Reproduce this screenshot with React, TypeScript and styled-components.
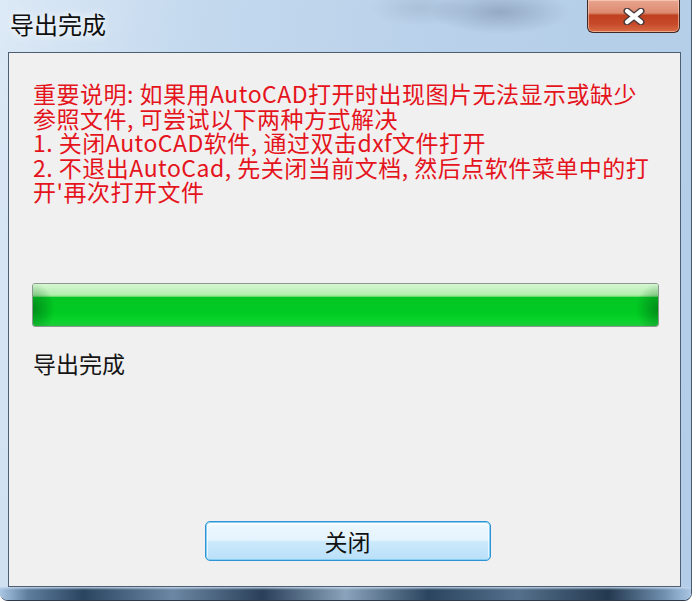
import React from 'react';
import styled, { createGlobalStyle } from 'styled-components';

const GlobalStyle = createGlobalStyle`
  html, body {
    margin: 0;
    padding: 0;
    background: #ffffff;
  }
  body {
    font-family: "Noto Sans CJK SC", "Noto Sans", sans-serif;
  }
`;

const Window = styled.div`
  width: 692px;
  height: 601px;
  box-sizing: border-box;
  display: flex;
  flex-direction: column;
  border-radius: 0 0 8px 8px;
  border-right: 1px solid #4a5a6c;
  border-bottom: 1px solid #2c3a4a;
  background:
    radial-gradient(ellipse 70px 22px at 500px 12px, rgba(120, 140, 165, 0.55), transparent),
    radial-gradient(ellipse 50px 18px at 420px 8px, rgba(140, 160, 185, 0.35), transparent),
    linear-gradient(100deg, #dce9f6 0%, #c4d9ee 25%, #b9d1ea 55%, #b3cde8 100%);
  overflow: hidden;
`;

const TitleBar = styled.div`
  height: 52px;
  flex-shrink: 0;
  display: flex;
  justify-content: space-between;
  align-items: flex-start;
`;

const Title = styled.div`
  margin: 7px 0 0 10px;
  font-size: 24px;
  line-height: 34px;
  color: #101010;
  text-shadow: 0 0 6px rgba(255, 255, 255, 0.95), 0 0 12px rgba(255, 255, 255, 0.8);
`;

const CloseButton = styled.div`
  width: 93px;
  height: 33px;
  margin-right: 11px;
  box-sizing: border-box;
  display: flex;
  align-items: center;
  justify-content: center;
  border: 1px solid #3b2a28;
  border-top: none;
  border-radius: 0 0 6px 6px;
  background: linear-gradient(
    to bottom,
    #e9a58f 0%,
    #dc8a70 40%,
    #c0401f 48%,
    #c64a2a 75%,
    #d96c45 100%
  );
  box-shadow: inset 0 0 0 1px rgba(255, 220, 200, 0.55);
`;

const Client = styled.div`
  flex: 1;
  margin: 0 10px 0 8px;
  box-sizing: border-box;
  border: 1px solid #4e5f72;
  background: #f0f0f0;
  display: flex;
  flex-direction: column;
  padding: 28px 21px 25px 23px;
`;

const Notice = styled.div`
  color: #e5141c;
  font-size: 23px;
  line-height: 24.5px;
  letter-spacing: 0.5px;
  padding-left: 1px;
  white-space: nowrap;
`;

const NoticeLine = styled.div`
  height: 24.5px;
`;

const ProgressTrack = styled.div`
  margin-top: 79px;
  height: 44px;
  box-sizing: border-box;
  border: 1px solid #8c9a8e;
  border-radius: 3px;
  background: #e6e6e6;
  overflow: hidden;
`;

const ProgressFill = styled.div`
  height: 100%;
  background:
    radial-gradient(ellipse 22px 26px at 0% 60%, rgba(0, 90, 20, 0.55), transparent),
    radial-gradient(ellipse 22px 26px at 100% 60%, rgba(0, 90, 20, 0.55), transparent),
    linear-gradient(
      to bottom,
      #d6f6d2 0%,
      #b4efb0 25%,
      #8fe58c 29%,
      #05c624 32%,
      #00cc22 70%,
      #0ad42c 88%,
      #20c83c 100%
    );
`;

const StatusText = styled.div`
  margin-top: 24px;
  font-size: 23px;
  line-height: 24px;
  color: #151515;
  padding-left: 1px;
`;

const Footer = styled.div`
  margin-top: auto;
  display: flex;
  justify-content: center;
  padding-left: 4px;
`;

const Button = styled.button`
  width: 286px;
  height: 40px;
  box-sizing: border-box;
  border: 1px solid #2f94d6;
  border-radius: 5px;
  background: linear-gradient(to bottom, #eef8fe 0%, #e4f3fd 48%, #cbe9fc 52%, #b9e0f8 100%);
  box-shadow: inset 0 0 0 1px rgba(110, 195, 240, 0.8), inset 0 1px 0 2px rgba(255, 255, 255, 0.6);
  font-family: "Noto Sans CJK SC", "Noto Sans", sans-serif;
  font-size: 23px;
  color: #111;
  padding: 0;
  cursor: pointer;
`;

const BottomFrame = styled.div`
  height: 13px;
  flex-shrink: 0;
  background:
    linear-gradient(to bottom, rgba(200, 220, 240, 0.9) 0px, rgba(200, 220, 240, 0) 3px),
    linear-gradient(
      to right,
      #a9c6e4 0%,
      #5f7e9e 4%,
      #2a4560 12%,
      #6c87a3 25%,
      #2a405a 38%,
      #8ba3bb 50%,
      #2b4560 62%,
      #55708c 75%,
      #23394f 88%,
      #6f8eae 96%,
      #a9c6e4 100%
    );
`;

const CloseGlyph = () => (
  <svg width="24" height="17" viewBox="0 0 24 17">
    <g strokeLinecap="round">
      <line x1="5" y1="3" x2="19" y2="14" stroke="#4a3a3a" strokeWidth="7" />
      <line x1="19" y1="3" x2="5" y2="14" stroke="#4a3a3a" strokeWidth="7" />
      <line x1="5" y1="3" x2="19" y2="14" stroke="#ffffff" strokeWidth="4.2" />
      <line x1="19" y1="3" x2="5" y2="14" stroke="#ffffff" strokeWidth="4.2" />
    </g>
  </svg>
);

const notice = [
  '重要说明: 如果用AutoCAD打开时出现图片无法显示或缺少',
  '参照文件, 可尝试以下两种方式解决',
  '1. 关闭AutoCAD软件, 通过双击dxf文件打开',
  '2. 不退出AutoCad, 先关闭当前文档, 然后点软件菜单中的打',
  "开'再次打开文件",
];

const App: React.FC = () => {
  const progress = 100;

  return (
    <>
      <GlobalStyle />
      <Window>
        <TitleBar>
          <Title>导出完成</Title>
          <CloseButton>
            <CloseGlyph />
          </CloseButton>
        </TitleBar>
        <Client>
          <Notice>
            {notice.map((line) => (
              <NoticeLine key={line}>{line}</NoticeLine>
            ))}
          </Notice>
          <ProgressTrack>
            <ProgressFill style={{ width: `${progress}%` }} />
          </ProgressTrack>
          <StatusText>导出完成</StatusText>
          <Footer>
            <Button>关闭</Button>
          </Footer>
        </Client>
        <BottomFrame />
      </Window>
    </>
  );
};

export default App;
